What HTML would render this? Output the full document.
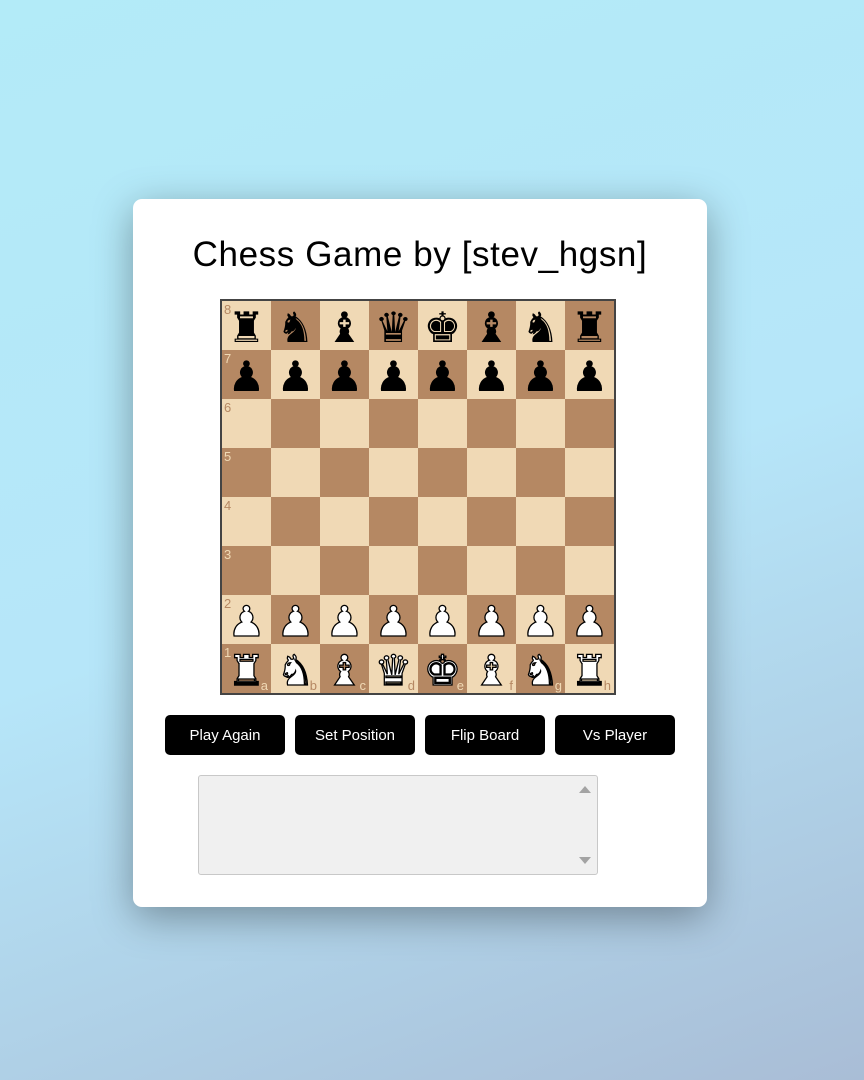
<!DOCTYPE html>
<html><head><meta charset="utf-8"><style>
*{margin:0;padding:0;box-sizing:border-box}
html,body{width:864px;height:1080px;overflow:hidden}
body{background:linear-gradient(160deg,#b3ebf8 0%,#b6e6f9 50%,#a9bdd6 100%);font-family:"Liberation Sans",sans-serif;position:relative}
.card{position:absolute;left:133px;top:199px;width:574px;height:708px;background:#fff;border-radius:9px;box-shadow:0 10px 40px rgba(0,0,0,.35)}
h1{position:absolute;left:133px;width:574px;top:235px;text-align:center;font-weight:400;font-size:35px;color:#000;letter-spacing:.6px}
.board{position:absolute;left:220px;top:299px;width:396px;height:396px;border:2px solid #444;display:grid;grid-template-columns:repeat(8,49px);grid-template-rows:repeat(8,49px)}
.sq{position:relative;display:flex;align-items:center;justify-content:center;font-family:"DejaVu Sans",sans-serif;font-size:42px;line-height:1;padding-top:4px}
.l{background:#f0d9b5}.d{background:#b58863}
.b{color:#000}
.w{color:#fff;-webkit-text-stroke:1.3px #000}
.r{position:absolute;left:2px;top:2px;font-size:13px;font-family:"Liberation Sans",sans-serif;-webkit-text-stroke:0}
.f{position:absolute;right:3px;bottom:1px;font-size:13px;font-family:"Liberation Sans",sans-serif;-webkit-text-stroke:0}
.l .r,.l .f{color:#b58863}.d .r,.d .f{color:#f0d9b5}
.btn{position:absolute;top:715px;width:120px;height:40px;background:#000;color:#fff;border-radius:5px;font-size:15px;display:flex;align-items:center;justify-content:center}
.ta{position:absolute;left:198px;top:775px;width:400px;height:100px;background:#f0f0f0;border:1px solid #c8c8c8;border-radius:3px}
.up{position:absolute;right:6px;top:10px;width:0;height:0;border-left:6px solid transparent;border-right:6px solid transparent;border-bottom:7px solid #a3a3a3}
.dn{position:absolute;right:6px;bottom:10px;width:0;height:0;border-left:6px solid transparent;border-right:6px solid transparent;border-top:7px solid #a3a3a3}
</style></head><body>
<div class="card"></div>
<h1>Chess Game by [stev_hgsn]</h1>
<div class="board">
<div class="sq l b"><span class="r">8</span>♜</div><div class="sq d b">♞</div><div class="sq l b">♝</div><div class="sq d b">♛</div><div class="sq l b">♚</div><div class="sq d b">♝</div><div class="sq l b">♞</div><div class="sq d b">♜</div>
<div class="sq d b"><span class="r">7</span>♟</div><div class="sq l b">♟</div><div class="sq d b">♟</div><div class="sq l b">♟</div><div class="sq d b">♟</div><div class="sq l b">♟</div><div class="sq d b">♟</div><div class="sq l b">♟</div>
<div class="sq l"><span class="r">6</span></div><div class="sq d"></div><div class="sq l"></div><div class="sq d"></div><div class="sq l"></div><div class="sq d"></div><div class="sq l"></div><div class="sq d"></div>
<div class="sq d"><span class="r">5</span></div><div class="sq l"></div><div class="sq d"></div><div class="sq l"></div><div class="sq d"></div><div class="sq l"></div><div class="sq d"></div><div class="sq l"></div>
<div class="sq l"><span class="r">4</span></div><div class="sq d"></div><div class="sq l"></div><div class="sq d"></div><div class="sq l"></div><div class="sq d"></div><div class="sq l"></div><div class="sq d"></div>
<div class="sq d"><span class="r">3</span></div><div class="sq l"></div><div class="sq d"></div><div class="sq l"></div><div class="sq d"></div><div class="sq l"></div><div class="sq d"></div><div class="sq l"></div>
<div class="sq l w"><span class="r">2</span>♟</div><div class="sq d w">♟</div><div class="sq l w">♟</div><div class="sq d w">♟</div><div class="sq l w">♟</div><div class="sq d w">♟</div><div class="sq l w">♟</div><div class="sq d w">♟</div>
<div class="sq d w"><span class="r">1</span>♜<span class="f">a</span></div><div class="sq l w">♞<span class="f">b</span></div><div class="sq d w">♝<span class="f">c</span></div><div class="sq l w">♛<span class="f">d</span></div><div class="sq d w">♚<span class="f">e</span></div><div class="sq l w">♝<span class="f">f</span></div><div class="sq d w">♞<span class="f">g</span></div><div class="sq l w">♜<span class="f">h</span></div>
</div>
<div class="btn" style="left:165px">Play Again</div>
<div class="btn" style="left:295px">Set Position</div>
<div class="btn" style="left:425px">Flip Board</div>
<div class="btn" style="left:555px">Vs Player</div>
<div class="ta"><div class="up"></div><div class="dn"></div></div>
</body></html>
